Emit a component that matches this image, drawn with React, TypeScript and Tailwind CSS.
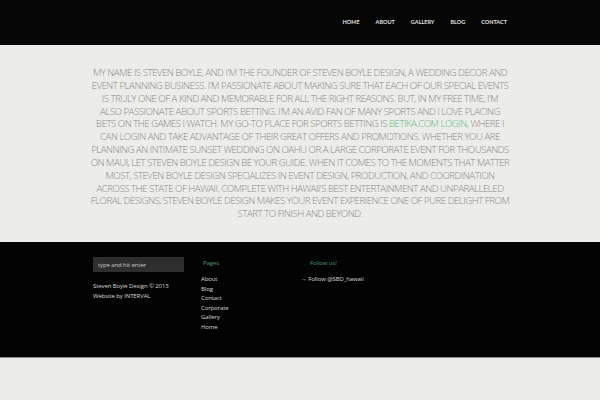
import React from 'react';

const lines = [
  "MY NAME IS STEVEN BOYLE, AND I'M THE FOUNDER OF STEVEN BOYLE DESIGN, A WEDDING DECOR AND",
  "EVENT PLANNING BUSINESS. I'M PASSIONATE ABOUT MAKING SURE THAT EACH OF OUR SPECIAL EVENTS",
  "IS TRULY ONE OF A KIND AND MEMORABLE FOR ALL THE RIGHT REASONS. BUT, IN MY FREE TIME, I'M",
  "ALSO PASSIONATE ABOUT SPORTS BETTING. I'M AN AVID FAN OF MANY SPORTS AND I LOVE PLACING",
  null,
  "CAN LOGIN AND TAKE ADVANTAGE OF THEIR GREAT OFFERS AND PROMOTIONS. WHETHER YOU ARE",
  "PLANNING AN INTIMATE SUNSET WEDDING ON OAHU OR A LARGE CORPORATE EVENT FOR THOUSANDS",
  "ON MAUI, LET STEVEN BOYLE DESIGN BE YOUR GUIDE. WHEN IT COMES TO THE MOMENTS THAT MATTER",
  "MOST, STEVEN BOYLE DESIGN SPECIALIZES IN EVENT DESIGN, PRODUCTION, AND COORDINATION",
  "ACROSS THE STATE OF HAWAII. COMPLETE WITH HAWAII'S BEST ENTERTAINMENT AND UNPARALLELED",
  "FLORAL DESIGNS, STEVEN BOYLE DESIGN MAKES YOUR EVENT EXPERIENCE ONE OF PURE DELIGHT FROM",
  "START TO FINISH AND BEYOND.",
];

const navItems = ['HOME', 'ABOUT', 'GALLERY', 'BLOG', 'CONTACT'];
const pages = ['About', 'Blog', 'Contact', 'Corporate', 'Gallery', 'Home'];

export default function App() {
  return (
    <div className="min-h-[400px] bg-[#ecede8] font-['Open_Sans',sans-serif]">
      {/* Header */}
      <header className="h-[45px] bg-[#050505] flex justify-end items-center pr-[93px]">
        <nav className="flex gap-[16px] text-[5.5px] font-bold text-[#e2e2e2] font-['Lato',sans-serif] -mt-[1px]">
          {navItems.map(n => (
            <a key={n} href="#">{n}</a>
          ))}
        </nav>
      </header>

      {/* Intro text */}
      <section className="h-[197px] pt-[22px] flex justify-center">
        <p className="text-center text-[9.7px] leading-[12.85px] font-light text-[#8a8a8a] tracking-[-0.5px] whitespace-nowrap">
          {lines.map((l, i) =>
            l === null ? (
              <span key={i}>
                BETS ON THE GAMES I WATCH. MY GO-TO PLACE FOR SPORTS BETTING IS{' '}
                <a href="#" className="text-[#62b884]">BETIKA.COM LOGIN</a>, WHERE I
                <br />
              </span>
            ) : (
              <span key={i}>
                {l}
                <br />
              </span>
            )
          )}
        </p>
      </section>

      {/* Footer */}
      <footer className="h-[116px] bg-[#030303] border-b border-[#8a8a88] pl-[93px] pt-[15px] flex text-[6px] tracking-[-0.1px] text-[#d8d8d8]">
        <div className="w-[108px]">
          <input
            placeholder="type and hit enter"
            className="w-[91px] h-[15px] bg-[#2e2e2e] px-[5px] text-[6px] text-[#ccc] placeholder:text-[#c8c8c8] outline-none"
          />
          <div className="mt-[10px] leading-[9.5px]">
            <div>Steven Boyle Design © 2013</div>
            <div>Website by INTERVAL</div>
          </div>
        </div>
        <div className="w-[100px] pt-[2px]">
          <div className="text-[#4e9a6c] pl-[2px]">Pages</div>
          <ul className="mt-[7px] leading-[9.6px]">
            {pages.map(p => (
              <li key={p}><a href="#">{p}</a></li>
            ))}
          </ul>
        </div>
        <div className="pt-[2px]">
          <div className="text-[#4e9a6c] pl-[9px]">Follow us!</div>
          <div className="mt-[7px] leading-[9.6px]">→ Follow @SBD_hawaii</div>
        </div>
      </footer>
    </div>
  );
}
